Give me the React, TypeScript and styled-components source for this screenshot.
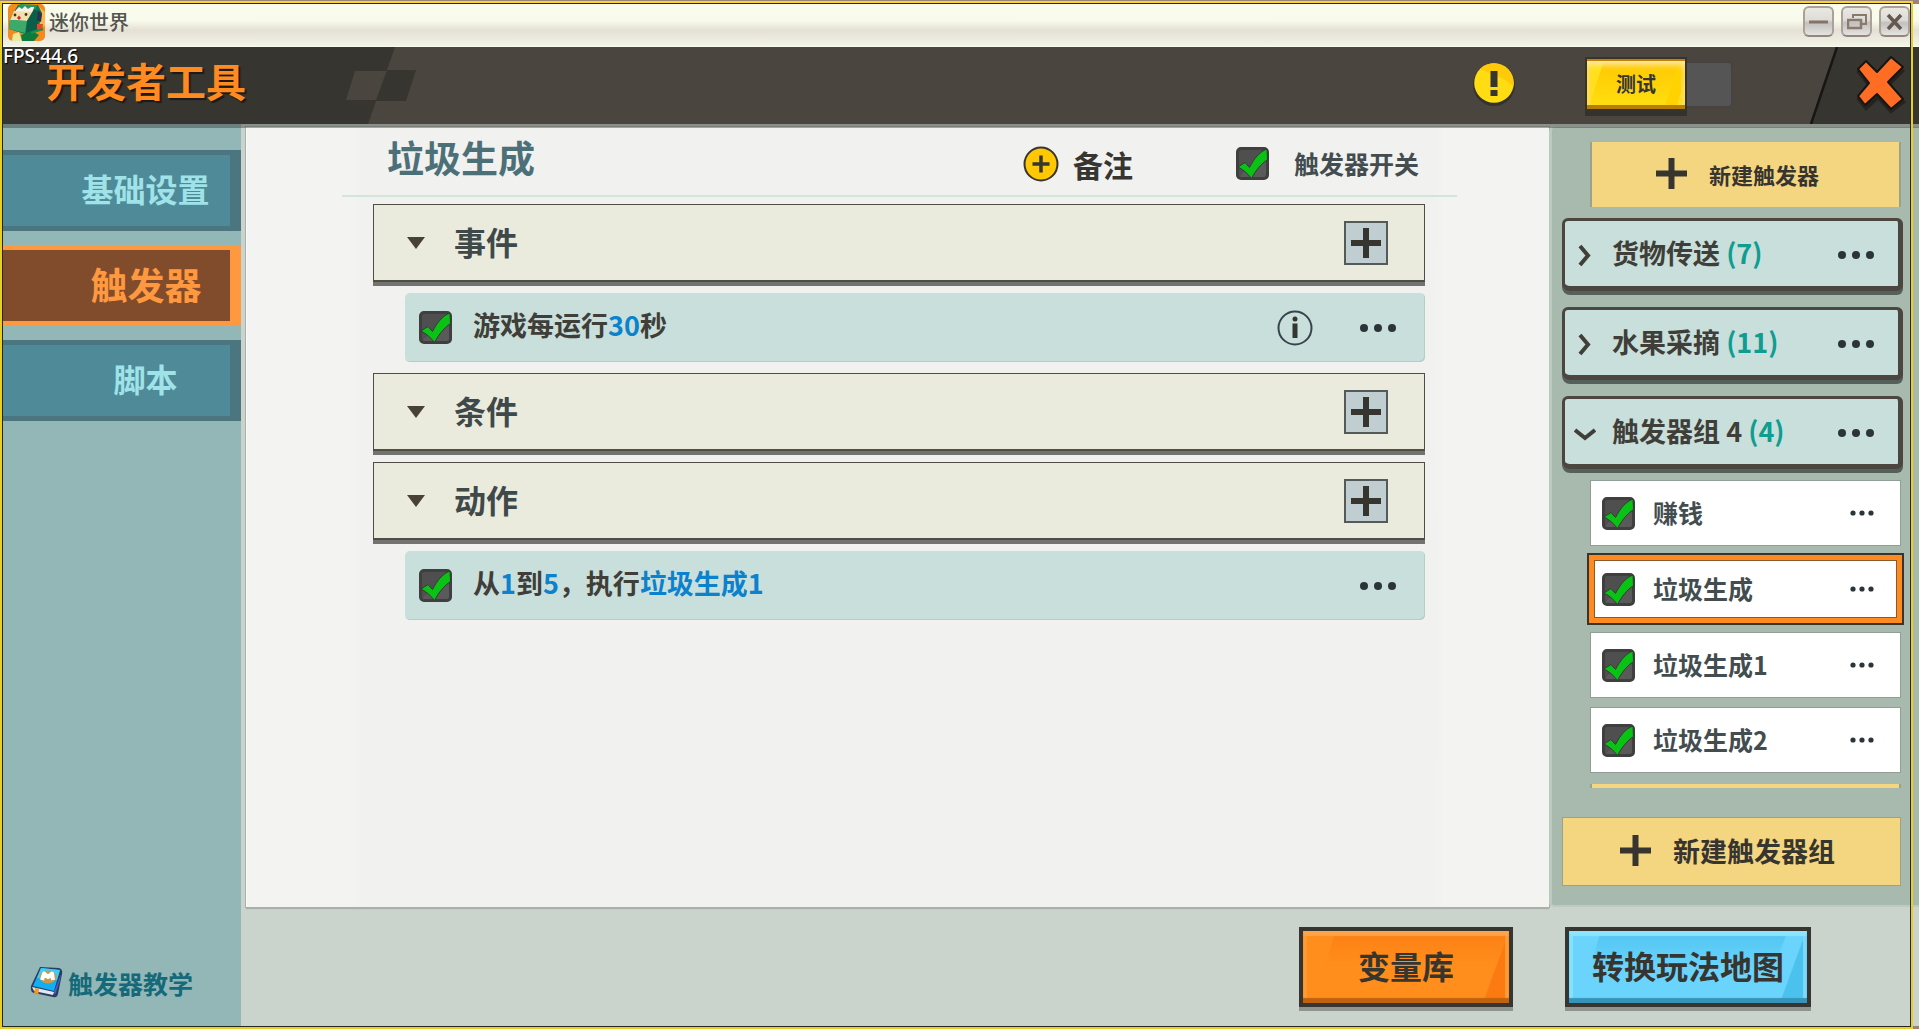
import React, { useState } from "react";
import styled, { createGlobalStyle, css } from "styled-components";

const ink = "#37352f";

const GlobalStyle = createGlobalStyle`
  * { box-sizing: border-box; }
  body {
    margin: 0;
    background: #9a8479;
    font-family: "Noto Sans CJK SC", "Noto Sans", sans-serif;
    color: ${ink};
  }
  button, input { font: inherit; color: inherit; }
  button { cursor: pointer; }
  h1, h2 { margin: 0; }
`;

/* ---------- window ---------- */

const Desktop = styled.div`
  position: relative;
  display: flex;
  flex-direction: column;
  min-height: 100vh;
  padding: 4px 0 3px 3px;
  overflow: hidden;
`;

const SelectionFrame = styled.div`
  position: absolute;
  inset: 1px 6px 0 0;
  border: 2px solid #e8cf24;
  border-top-color: #fbd62a;
  pointer-events: none;
  z-index: 2;
  &::after {
    content: "";
    position: absolute;
    inset: 0;
    border: 1px solid #26251f;
  }
`;

const TitleBar = styled.header`
  display: flex;
  align-items: flex-start;
  height: 43px;
  padding: 0 9px 0 5px;
  background: linear-gradient(#f9fbec 0, #f8faeb 40%, #e4e0d5 62%, #edebe0 85%, #f3f4e6 100%);
  border-bottom: 1px solid #fbfcf0;
`;

const WindowTitle = styled.span`
  flex: 1;
  margin-left: 4px;
  font-size: 20px;
  line-height: 36px;
  color: #55554f;
  font-weight: 500;
`;

const WindowButtons = styled.div`
  display: flex;
  gap: 7px;
  padding-top: 2px;
`;

const WindowButton = styled.button`
  display: grid;
  place-items: center;
  width: 31px;
  height: 31px;
  padding: 0;
  border: 2px solid #aba197;
  border-bottom-color: #93877b;
  border-radius: 6px;
  background: linear-gradient(#e9e8e1, #dddcd8 45%, #c2c1c0 55%, #e4e3df);
`;

/* ---------- top bar ---------- */

const TopBar = styled.div`
  position: relative;
  z-index: 1;
  display: flex;
  align-items: center;
  height: 77px;
  padding: 0 13px 3px 43px;
  background: #4a463f;
  box-shadow: 0 4px 0 rgba(60, 62, 58, 0.45);
`;

const LeftDecor = styled.svg`
  position: absolute;
  left: 0;
  top: 0;
`;

const RightDecor = styled.svg`
  position: absolute;
  right: 0;
  top: 0;
`;

const Fps = styled.span`
  position: absolute;
  left: 0;
  top: -1px;
  font-family: "Noto Sans", sans-serif;
  font-size: 19px;
  line-height: 20px;
  font-weight: 500;
  color: #fff;
  text-shadow: 1px 1px 1px #000;
`;

const AppTitle = styled.h1`
  position: relative;
  flex: 1;
  font-size: 40px;
  line-height: 44px;
  font-weight: 700;
  color: #ff8a1f;
  text-shadow: 2px 2px 1px #1c1a16;
  padding-bottom: 9px;
`;

const IconButton = styled.button`
  position: relative;
  display: grid;
  place-items: center;
  padding: 0;
  border: 0;
  background: none;
`;

const TestSwitch = styled.div`
  display: flex;
  align-items: center;
  width: 148px;
  margin: 0 123px 0 69px;
`;

const TestButton = styled.button`
  width: 102px;
  height: 54px;
  padding: 0;
  border: 2px solid #37342c;
  box-shadow: 0 5px 0 #34322d, inset 0 2px 0 #c77f06, inset 0 -4px 0 #b87c08,
    inset 0 8px 6px -2px #ffe9a0, inset 0 0 0 4px rgba(255, 214, 90, 0.6);
  background: linear-gradient(108deg, #ffe01a 0 15%, transparent 15.5%),
    linear-gradient(288deg, #ffe01a 0 8%, #ffd200 8.5% 18%, transparent 18.5%),
    linear-gradient(#ffc600, #ffe010);
  font-size: 20px;
  font-weight: 700;
  line-height: 24px;
`;

const TestTrack = styled.span`
  flex: 1;
  height: 47px;
  border: 2px solid #454442;
  border-left: 0;
  border-radius: 0 5px 5px 0;
  background: #555;
`;

/* ---------- body ---------- */

const Body = styled.div`
  flex: 1;
  display: grid;
  grid-template-columns: 238px 1fr;
`;

const Sidebar = styled.aside`
  display: flex;
  flex-direction: column;
  padding-top: 26px;
  background: #92b7b6;
`;

const Nav = styled.nav`
  display: flex;
  flex-direction: column;
  gap: 14px;
`;

const NavTab = styled.button<{ $active?: boolean }>`
  height: 81px;
  padding: 0 ${(p) => (p.$active ? 15 : 16)}px ${(p) => (p.$active ? 3 : 6)}px 74px;
  border: solid ${(p) => (p.$active ? "#ff983f" : "#4b7680")};
  border-width: 5px 11px 5px 0;
  background: ${(p) => (p.$active ? "#814c2c" : "#4f8a98")};
  color: ${(p) => (p.$active ? "#ff983f" : "#9fe2e8")};
  font-size: ${(p) => (p.$active ? 37 : 32)}px;
  font-weight: 700;
  line-height: 60px;
  text-align: center;
  white-space: nowrap;
`;

const TutorialLink = styled.a`
  display: flex;
  align-items: center;
  gap: 5px;
  margin-top: auto;
  padding: 0 0 25px 27px;
  font-size: 25px;
  line-height: 36px;
  font-weight: 700;
  color: #156a7a;
  text-decoration: none;
`;

const Workspace = styled.div`
  display: flex;
  flex-direction: column;
  background: #cbd4cc;
  padding: 3px 0 0 5px;
`;

const Panels = styled.div`
  flex: 1;
  display: grid;
  grid-template-columns: 1fr 370px;
`;

const Editor = styled.main`
  padding: 0 92px 0 95px;
  background: linear-gradient(90deg, #f3f3f1 8%, #f1f1ef 9% 91%, #f3f3f1 92%);
  border-top: 1px solid #fbfbfa;
  border-left: 1px solid #fbfbfa;
  box-shadow: 0 0 0 1px #a9b0a9, 0 2px 1px #a9b0a9;
`;

const EditorHead = styled.div`
  display: flex;
  align-items: center;
  height: 69px;
  padding: 0 38px 0 45px;
  border-bottom: 2px solid #d3e4d9;
`;

const TriggerName = styled.h2`
  flex: 1;
  font-size: 37px;
  line-height: 56px;
  font-weight: 700;
  color: #4c7078;
  padding-bottom: 10px;
`;

const NoteButton = styled.button`
  display: flex;
  align-items: center;
  gap: 14px;
  margin-right: 103px;
  padding: 4px 0 0;
  border: 0;
  background: none;
  font-size: 30px;
  line-height: 34px;
  font-weight: 700;
`;

const SwitchLabel = styled.label`
  display: flex;
  align-items: center;
  gap: 25px;
  padding-top: 3px;
  font-size: 25px;
  line-height: 32px;
  font-weight: 700;
  color: #434d4f;
`;

const Blocks = styled.div`
  display: flex;
  flex-direction: column;
  gap: 11px;
  padding: 7px 32px 0 31px;
`;

const BlockHead = styled.div`
  display: flex;
  align-items: center;
  height: 78px;
  padding: 0 36px 0 33px;
  border: 1px solid #504d45;
  border-bottom-width: 2px;
  background: #ebebdd;
  box-shadow: 0 4px 0 #737370;
`;

const BlockTitle = styled.h2`
  flex: 1;
  margin-left: 29px;
  font-size: 32px;
  line-height: 48px;
  font-weight: 700;
  padding-bottom: 4px;
  color: #40494a;
`;

const AddButton = styled.button`
  display: grid;
  place-items: center;
  width: 44px;
  height: 44px;
  padding: 0;
  border: 2px solid #545a59;
  background: #c0cdd1;
`;

const Step = styled.div`
  display: flex;
  align-items: center;
  height: 69px;
  margin-left: 32px;
  padding: 0 29px 0 14px;
  border-radius: 5px;
  background: #c9dfdb;
  box-shadow: inset -1px -1px 0 #b3cdc8;
`;

const StepText = styled.label`
  flex: 1;
  margin-left: 21px;
  font-size: 27px;
  line-height: 42px;
  font-weight: 700;
  padding-bottom: 6px;
  color: #403e38;
`;

const Param = styled.a`
  color: #0b82cd;
  text-decoration: none;
`;

const StepTools = styled.div`
  display: flex;
  align-items: center;
  gap: 47px;
`;

/* ---------- trigger list ---------- */

const TriggerPanel = styled.aside`
  position: relative;
  display: flex;
  flex-direction: column;
  padding: 15px 18px 19px 10px;
  border: solid #bccbc0;
  border-width: 0 0 2px 3px;
  border-radius: 5px 0 0 5px;
  background: #a8baae;
`;

const TriggerScroll = styled.div`
  flex: 1 1 0;
  min-height: 0;
  margin: 0 -3px 29px 0;
  padding-right: 3px;
  overflow: hidden;
`;

const CreateButton = styled.button<{ $wide?: boolean }>`
  display: flex;
  align-items: center;
  justify-content: center;
  gap: 22px;
  height: ${(p) => (p.$wide ? 69 : 65)}px;
  padding: 0 ${(p) => (p.$wide ? 8 : 16)}px 2px 0;
  border: solid #98a38a;
  border-width: ${(p) => (p.$wide ? "1px" : "0 2px")};
  background: #f5d680;
  font-size: ${(p) => (p.$wide ? 27 : 22)}px;
  line-height: 40px;
  font-weight: 700;
`;

const Indented = styled.div`
  display: grid;
  margin: 0 0 11px 28px;
`;

const Group = styled.div`
  display: flex;
  align-items: center;
  height: 73px;
  margin: 0 -2px 16px 0;
  padding: 3px 24px 0 9px;
  border: solid #4b463f;
  border-width: 3px 5px 5px 3px;
  border-radius: 6px 6px 6px 8px;
  background: #c9dfdb;
  box-shadow: 0 4px 0 #56605a;
`;

const GroupName = styled.span`
  flex: 1;
  margin-left: 16px;
  font-size: 27px;
  line-height: 40px;
  font-weight: 700;
  padding-bottom: 4px;
  color: #403e38;
  white-space: nowrap;
`;

const Count = styled.span`
  color: #0e9d90;
`;

const TriggerList = styled.div`
  display: flex;
  flex-direction: column;
  gap: 9px;
  margin: -5px 0 11px 28px;
`;

const TriggerRow = styled.div<{ $selected?: boolean }>`
  display: flex;
  align-items: center;
  background: #fff;
  ${(p) =>
    p.$selected
      ? css`
          height: 72px;
          margin: -2px -3px -2px -3px;
          padding: 0 28px 0 13px;
          border: 2px solid ${ink};
          box-shadow: inset 0 0 0 5px #ff8a20, inset 0 0 0 6px #8a5a2c;
        `
      : css`
          height: 66px;
          padding: 0 26px 0 11px;
          border: 1px solid #8f9f96;
        `}
`;

const TriggerLabel = styled.label`
  flex: 1;
  margin-left: 18px;
  padding-bottom: 2px;
  font-size: 25px;
  line-height: 36px;
  font-weight: 700;
  color: #434d4f;
`;

/* ---------- footer ---------- */

const Footer = styled.footer`
  display: flex;
  justify-content: flex-end;
  gap: 52px;
  height: 119px;
  padding: 20px 108px 0 0;
`;

const GlossButton = styled.button<{ $tone: "orange" | "blue" }>`
  height: 80px;
  padding: 0 ${(p) => (p.$tone === "orange" ? 55 : 23)}px 5px;
  border: 4px solid ${ink};
  font-size: 32px;
  line-height: 48px;
  font-weight: 700;
  white-space: nowrap;
  ${(p) =>
    p.$tone === "orange"
      ? css`
          background: linear-gradient(105deg, #ff8e1c 0 14%, transparent 14.5%),
            linear-gradient(290deg, #fb7a12 0 11%, transparent 11.5%),
            linear-gradient(#fd7f14, #ff8e1c 50%);
          box-shadow: 0 4px 0 #8f9490, inset 0 -5px 1px #c0620e, inset 0 5px 1px #ffa448,
            inset 4px 0 0 #ff9a34, inset -4px 0 0 #ff9a34;
        `
      : css`
          background: linear-gradient(105deg, #6ad4fd 0 12%, transparent 12.5%),
            linear-gradient(290deg, #4bc1ee 0 10%, #6ad4fd 10.5% 17%, transparent 17.5%),
            linear-gradient(#4fc4f0, #6ad4fd 50%);
          box-shadow: 0 4px 0 #8f9490, inset 0 -5px 1px #3794b8, inset 0 5px 1px #8ce4ff,
            inset 4px 0 0 #86e0ff, inset -4px 0 0 #78d9fb;
        `}
`;

/* ---------- checkbox ---------- */

const CheckWrap = styled.span`
  position: relative;
  flex: none;
  width: 33px;
  height: 33px;
`;

const CheckInput = styled.input`
  display: block;
  appearance: none;
  width: 33px;
  height: 33px;
  margin: 0;
  border: 3px solid #3f3f3f;
  border-radius: 5px;
  background: linear-gradient(135deg, #4f4f4f 50%, #5a5a5a 50%);
  &:not(:checked) + svg { display: none; }
`;

const CheckMark = styled.svg`
  position: absolute;
  inset: 0;
  pointer-events: none;
`;

function Check({ id }: { id: string }) {
  const [on, setOn] = useState(true);
  return (
    <CheckWrap>
      <CheckInput id={id} type="checkbox" checked={on} onChange={() => setOn(!on)} />
      <CheckMark width="33" height="33" viewBox="0 0 33 33" aria-hidden="true">
        <path
          d="M2 20 L9 15.500 L13.500 20.500 C18 12 23 5 31 2 L31.500 12.500 C25 17 20 23 15.500 31.500 C12 27 8 23 2 20 Z"
          fill="#08c214"
          stroke="#383838"
          strokeWidth="1"
        />
      </CheckMark>
    </CheckWrap>
  );
}

/* ---------- icons ---------- */

const Plus = ({ size = 31, weight = 6 }: { size?: number; weight?: number }) => (
  <svg width={size} height={size} viewBox={`0 0 ${size} ${size}`} aria-hidden="true">
    <rect x={(size - weight) / 2} y="0" width={weight} height={size} fill={ink} />
    <rect x="0" y={(size - weight) / 2} width={size} height={weight} fill={ink} />
  </svg>
);

const Dots = ({ small }: { small?: boolean }) => (
  <IconButton aria-label="更多">
    {small ? (
      <svg width="24" height="8" viewBox="0 0 24 8">
        {[3, 12, 21].map((x) => <circle key={x} cx={x} cy="4" r="2.600" fill="#2b3539" />)}
      </svg>
    ) : (
      <svg width="36" height="10" viewBox="0 0 36 10">
        {[4, 18, 32].map((x) => <circle key={x} cx={x} cy="5" r="4" fill="#2b3539" />)}
      </svg>
    )}
  </IconButton>
);

const Caret = () => (
  <svg width="18" height="12" viewBox="0 0 18 12" aria-hidden="true">
    <path d="M0 0 H18 L9 12 Z" fill="#474137" />
  </svg>
);

const Chevron = ({ open }: { open?: boolean }) => (
  <svg width="22" height="24" viewBox="0 0 22 24" aria-hidden="true">
    <path
      d={open ? "M1 9 L11 17 L21 9" : "M6 3 L14 12.500 L6 22"}
      fill="none"
      stroke="#403e38"
      strokeWidth="4"
    />
  </svg>
);

const AppLogo = () => (
  <svg width="37" height="37" viewBox="0 0 37 37" aria-hidden="true">
    <rect width="37" height="37" rx="5" fill="#f28a1c" />
    <path d="M30 2 L37 8 V22 L31 24 Z" fill="#ffb64a" />
    <path d="M10 1 L30 1 L34 9 L30 27 L20 31 L1 25 L2 15 Z" fill="#0f7a55" />
    <path d="M12 0 L29 1 L27 6 L9 5 Z" fill="#1f9a66" />
    <path d="M8 6 L11 3 L14 5 L17 2 L20 5 L23 3 L26 3 L25 8 L7 8 Z" fill="#f7f1ea" />
    <path d="M6 7 L25 8 L19 17 L2 16 Z" fill="#f3dfae" />
    <path d="M2 16 L19 17 L17 29 L1 25 Z" fill="#3bab6c" />
    <path d="M26 5 L32 9 L29 25 L18 29 L19 17 Z" fill="#0b5f47" />
    <circle cx="7" cy="11" r="1.400" fill="#46301c" />
    <circle cx="18" cy="10.500" r="1.400" fill="#46301c" />
    <path d="M9 14 L11 11.500 L13 14 L11 16 Z" fill="#d3261c" />
    <path d="M30 6 L34 10 L33 18 L29 16 Z" fill="#27324e" />
    <path d="M5 30 L11 28 L14 37 H4 Z" fill="#e9eaa0" />
    <path d="M13 31 L24 27 L31 31 L26 37 H14 Z" fill="#0d7a3e" />
    <path d="M29 20 L35 20 L34 27 L29 25 Z" fill="#e2482a" />
    <path d="M23 29 L35 25" stroke="#18924a" strokeWidth="2" />
  </svg>
);

const BookIcon = () => (
  <svg width="33" height="34" viewBox="0 0 33 34" aria-hidden="true">
    <path d="M10 1 L29 2 Q33 3 32 8 L28 28 Q27 32 23 31 L4 27 Q0 26 1 20 Z" fill="#2d3a62" />
    <path d="M2 21 L24 26 L23 29 L4 25 Z" fill="#dfe9f4" />
    <path d="M24 26 L31 8 L30 14 L25 29 Z" fill="#3d66c4" />
    <path d="M11 2 L30 4 L24 25 L3 20 Z" fill="#12aef2" />
    <path d="M11 2 L30 4 L27 14 L7 12 Z" fill="#3ccdf0" />
    <ellipse cx="18" cy="11" rx="8.500" ry="6.500" fill="#c89a4c" />
    <path d="M12 14 L14 7.500 L18 11 L22 7.500 L23 14" fill="none" stroke="#fff" strokeWidth="4" strokeLinejoin="round" />
    <path d="M5 22 L9 23 L8 30 L6 27 L4 28 Z" fill="#f59a22" />
  </svg>
);

const groups = [
  { name: "货物传送", count: 7 },
  { name: "水果采摘", count: 11 },
  { name: "触发器组 4", count: 4, open: true },
];

const triggers = ["赚钱", "垃圾生成", "垃圾生成1", "垃圾生成2"];

function Block({ title }: { title: string }) {
  return (
    <BlockHead>
      <Caret />
      <BlockTitle>{title}</BlockTitle>
      <AddButton aria-label={`添加${title}`}>
        <Plus size={30} />
      </AddButton>
    </BlockHead>
  );
}

export default function App() {
  const [selected, setSelected] = useState("垃圾生成");
  return (
    <>
      <GlobalStyle />
      <Desktop>
        <TitleBar>
          <AppLogo />
          <WindowTitle>迷你世界</WindowTitle>
          <WindowButtons>
            <WindowButton aria-label="最小化">
              <svg width="19" height="20" viewBox="0 0 19 20">
                <path d="M0 10 H19" stroke="#857465" strokeWidth="3" />
              </svg>
            </WindowButton>
            <WindowButton aria-label="还原">
              <svg width="20" height="20" viewBox="0 0 20 20" fill="none" stroke="#8a7a6d" strokeWidth="2">
                <path d="M6 6 V3 H19 V12 H15" />
                <path d="M1 8 H14 V16 H1 Z" strokeWidth="2.500" />
              </svg>
            </WindowButton>
            <WindowButton aria-label="关闭窗口">
              <svg width="19" height="20" viewBox="0 0 19 20">
                <path d="M3 3 L16 17 M16 3 L3 17" stroke="#65584f" strokeWidth="3.500" />
              </svg>
            </WindowButton>
          </WindowButtons>
        </TitleBar>

        <TopBar>
          <LeftDecor width="420" height="77" viewBox="0 0 420 77" aria-hidden="true">
            <path d="M0 0 H392 L365 77 H0 Z" fill="#373530" />
            <path d="M352 24 H384 L373 53 H343 Z" fill="#4a463f" />
            <path d="M384 23 H413 L403 54 H373 Z" fill="#373530" />
          </LeftDecor>
          <RightDecor width="110" height="77" viewBox="0 0 110 77" aria-hidden="true">
            <path d="M28 0 H110 V77 H2 Z" fill="#373530" />
            <path d="M28 0 L2 77" stroke="#171613" strokeWidth="2.500" />
          </RightDecor>
          <Fps>FPS:44.6</Fps>
          <AppTitle>开发者工具</AppTitle>
          <IconButton aria-label="提示">
            <svg width="44" height="44" viewBox="0 0 44 44">
              <circle cx="22" cy="23" r="21" fill="#33322e" />
              <circle cx="22" cy="21" r="19.800" fill="#ffdd12" />
              <path d="M8 7 A19.800 19.800 0 0 1 41.500 24 L30 16 Z" fill="#ffca0a" />
              <rect x="18.500" y="9" width="7" height="16" fill={ink} />
              <rect x="18.500" y="28" width="7" height="6" fill={ink} />
            </svg>
          </IconButton>
          <TestSwitch>
            <TestButton>测试</TestButton>
            <TestTrack />
          </TestSwitch>
          <IconButton aria-label="关闭">
            <svg width="50" height="60" viewBox="0 0 50 60">
              <path
                d="M34 4 L45 14 L31 28 L46 45 L34 54 L21 40 L9 51 L2 42 L13 29 L2 15 L10 7 L21 18 Z"
                transform="translate(1 3)"
                fill="#242320"
                stroke="#242320"
                strokeWidth="4"
              />
              <path
                d="M35 2 L47 12 L32 27 L47 44 L35 54 L21 39 L9 50 L2 41 L13 28 L2 14 L10 6 L21 17 Z"
                transform="translate(0 1)"
                fill="#ff6d24"
                stroke="#171512"
                strokeWidth="2"
                strokeLinejoin="round"
              />
            </svg>
          </IconButton>
        </TopBar>

        <Body>
          <Sidebar>
            <Nav>
              <NavTab>基础设置</NavTab>
              <NavTab $active>触发器</NavTab>
              <NavTab>脚本</NavTab>
            </Nav>
            <TutorialLink href="#tutorial">
              <BookIcon />
              触发器教学
            </TutorialLink>
          </Sidebar>

          <Workspace>
            <Panels>
              <Editor>
                <EditorHead>
                  <TriggerName>垃圾生成</TriggerName>
                  <NoteButton>
                    <svg width="36" height="36" viewBox="0 0 36 36" aria-hidden="true">
                      <circle cx="18" cy="18" r="16.500" fill="#ffc704" stroke={ink} strokeWidth="2" />
                      <path d="M18 9.500 V26.500 M9.500 18 H26.500" stroke={ink} strokeWidth="3.500" />
                    </svg>
                    备注
                  </NoteButton>
                  <SwitchLabel htmlFor="trigger-on">
                    <Check id="trigger-on" />
                    触发器开关
                  </SwitchLabel>
                </EditorHead>

                <Blocks>
                  <Block title="事件" />
                  <Step>
                    <Check id="step-event" />
                    <StepText htmlFor="step-event">
                      游戏每运行<Param href="#seconds">30</Param>秒
                    </StepText>
                    <StepTools>
                      <IconButton aria-label="说明">
                        <svg width="36" height="36" viewBox="0 0 36 36">
                          <circle cx="18" cy="18" r="16.500" fill="none" stroke="#37444a" strokeWidth="2" />
                          <circle cx="18" cy="9" r="2.500" fill={ink} />
                          <path d="M18 13.500 V28" stroke={ink} strokeWidth="5" />
                        </svg>
                      </IconButton>
                      <Dots />
                    </StepTools>
                  </Step>
                  <Block title="条件" />
                  <Block title="动作" />
                  <Step>
                    <Check id="step-action" />
                    <StepText htmlFor="step-action">
                      从<Param href="#from">1</Param>到<Param href="#to">5</Param>，执行
                      <Param href="#run">垃圾生成1</Param>
                    </StepText>
                    <StepTools>
                      <Dots />
                    </StepTools>
                  </Step>
                </Blocks>
              </Editor>

              <TriggerPanel>
                <TriggerScroll>
                  <Indented>
                    <CreateButton>
                      <Plus />
                      新建触发器
                    </CreateButton>
                  </Indented>
                  {groups.map((g) => (
                    <Group key={g.name}>
                      <Chevron open={g.open} />
                      <GroupName>
                        {g.name} <Count>({g.count})</Count>
                      </GroupName>
                      <Dots />
                    </Group>
                  ))}
                  <TriggerList>
                    {triggers.map((name, i) => (
                      <TriggerRow key={name} $selected={name === selected} onClick={() => setSelected(name)}>
                        <Check id={`trigger-${i}`} />
                        <TriggerLabel htmlFor={`trigger-${i}`}>{name}</TriggerLabel>
                        <Dots small />
                      </TriggerRow>
                    ))}
                  </TriggerList>
                  <Indented>
                    <CreateButton aria-label="新建触发器" />
                  </Indented>
                </TriggerScroll>
                <CreateButton $wide>
                  <Plus />
                  新建触发器组
                </CreateButton>
              </TriggerPanel>
            </Panels>

            <Footer>
              <GlossButton $tone="orange">变量库</GlossButton>
              <GlossButton $tone="blue">转换玩法地图</GlossButton>
            </Footer>
          </Workspace>
        </Body>
        <SelectionFrame />
      </Desktop>
    </>
  );
}
